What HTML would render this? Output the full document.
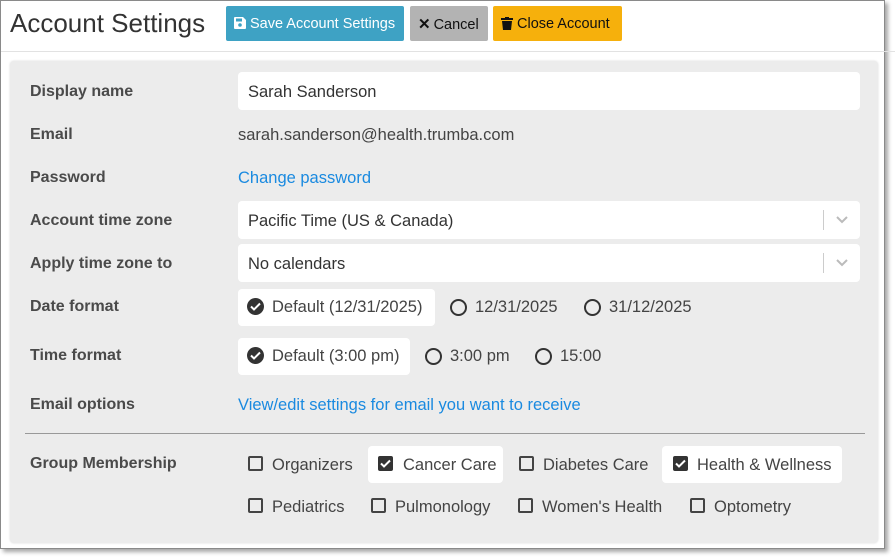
<!DOCTYPE html>
<html><head><style>
*{box-sizing:border-box;margin:0;padding:0}
body{width:896px;height:557px;background:#fff;font-family:"Liberation Sans",Arial,sans-serif;color:#333;position:relative;overflow:hidden}
.frame{position:absolute;left:0;top:0;width:885px;height:549px;border:1px solid #8a8a8a;box-shadow:3px 3px 4px rgba(0,0,0,.35);background:#fff}
.a{position:absolute;white-space:nowrap}
.hdr{left:10px;top:8px;font-size:26px;color:#333}
.btn{position:absolute;top:6px;height:35px;border-radius:2px;font-size:14.5px;line-height:37px;padding-left:8px}
.sep{position:absolute;left:1px;right:1px;top:51px;height:1px;background:#e2e2e2}
.panel{position:absolute;left:10px;top:61px;width:868px;height:482px;background:#ececec;border-radius:4px;box-shadow:0 0 2px rgba(0,0,0,.15)}
.lbl{font-size:16px;font-weight:bold;color:#4a4a4a;left:30px}
.val{font-size:16.5px;color:#444}
.inp{position:absolute;left:238px;width:622px;height:38px;background:#fff;border-radius:4px;font-size:16.5px;line-height:40px;padding-left:10px;color:#333}
.chip{position:absolute;background:#fff;border-radius:4px}
.lnk{color:#1a8ae0;font-size:16.5px}
.rad{position:absolute;width:17px;height:17px;border:2px solid #333;border-radius:50%}
.radc{position:absolute;width:17px;height:17px;background:#333;border-radius:50%}
.cb{position:absolute;width:15px;height:15px;border:2px solid #444;border-radius:2px}
.cbc{position:absolute;width:15px;height:15px;background:#333;border-radius:2px}
</style></head><body>
<div class="frame"></div>
<div class="a hdr">Account Settings</div>
<div class="btn" style="left:226px;width:178px;background:#3ea2c4;color:#fff"><svg width="12" height="12" viewBox="0 0 12 12" style="vertical-align:-1px;margin-right:4px"><path d="M1 0h8l3 3v8a1 1 0 0 1-1 1H1a1 1 0 0 1-1-1V1a1 1 0 0 1 1-1z" fill="#fff"/><rect x="2" y="1.5" width="6" height="3" fill="#3ea2c4"/><circle cx="6" cy="8" r="1.8" fill="#3ea2c4"/></svg>Save Account Settings</div>
<div class="btn" style="left:410px;width:78px;background:#b3b3b3;color:#111"><b style="font-size:15px;margin-right:3px">✕</b>Cancel</div>
<div class="btn" style="left:493px;width:129px;background:#f6b00c;color:#111"><svg width="12" height="13" viewBox="0 0 12 13" style="vertical-align:-2px;margin-right:4px"><rect x="0" y="1" width="12" height="2" fill="#111"/><rect x="4" y="0" width="4" height="2" fill="#111"/><path d="M1 4h10l-1 9H2z" fill="#111"/></svg>Close Account</div>
<div class="sep"></div>
<div class="panel"></div>

<div class="a lbl" style="top:83px">Display name</div>
<div class="inp" style="top:72px">Sarah Sanderson</div>
<div class="a lbl" style="top:126px">Email</div>
<div class="a val" style="left:238px;top:126px">sarah.sanderson@health.trumba.com</div>
<div class="a lbl" style="top:169px">Password</div>
<div class="a lnk" style="left:238px;top:169px">Change password</div>
<div class="a lbl" style="top:212px">Account time zone</div>
<div class="inp" style="top:201px">Pacific Time (US &amp; Canada)</div>
<div class="a lbl" style="top:255px">Apply time zone to</div>
<div class="inp" style="top:244px">No calendars</div>
<div class="a" style="left:823px;top:210px;width:1px;height:20px;background:#ccc"></div>
<div class="a" style="left:823px;top:253px;width:1px;height:20px;background:#ccc"></div>
<svg class="a" style="left:836px;top:216px" width="12" height="8"><path d="M1 1l5 5 5-5" stroke="#bbb" stroke-width="2" fill="none"/></svg>
<svg class="a" style="left:836px;top:259px" width="12" height="8"><path d="M1 1l5 5 5-5" stroke="#bbb" stroke-width="2" fill="none"/></svg>

<div class="a lbl" style="top:298px">Date format</div>
<div class="chip" style="left:238px;top:289px;width:197px;height:37px"></div>
<div class="radc" style="left:247px;top:298px"></div>
<svg class="a" style="left:250px;top:302px" width="11" height="9"><path d="M1 4.5l3 3 6-6" stroke="#fff" stroke-width="2" fill="none"/></svg>
<div class="a val" style="left:272px;top:298px">Default (12/31/2025)</div>
<div class="rad" style="left:450px;top:299px"></div>
<div class="a val" style="left:475px;top:298px">12/31/2025</div>
<div class="rad" style="left:584px;top:299px"></div>
<div class="a val" style="left:609px;top:298px">31/12/2025</div>

<div class="a lbl" style="top:347px">Time format</div>
<div class="chip" style="left:238px;top:338px;width:172px;height:37px"></div>
<div class="radc" style="left:247px;top:347px"></div>
<svg class="a" style="left:250px;top:351px" width="11" height="9"><path d="M1 4.5l3 3 6-6" stroke="#fff" stroke-width="2" fill="none"/></svg>
<div class="a val" style="left:272px;top:347px">Default (3:00 pm)</div>
<div class="rad" style="left:425px;top:348px"></div>
<div class="a val" style="left:450px;top:347px">3:00 pm</div>
<div class="rad" style="left:535px;top:348px"></div>
<div class="a val" style="left:560px;top:347px">15:00</div>

<div class="a lbl" style="top:396px">Email options</div>
<div class="a lnk" style="left:238px;top:396px">View/edit settings for email you want to receive</div>
<div class="a" style="left:25px;top:433px;width:840px;height:1px;background:#999"></div>

<div class="a lbl" style="top:455px">Group Membership</div>
<div class="chip" style="left:368px;top:446px;width:135px;height:37px"></div>
<div class="chip" style="left:662px;top:446px;width:180px;height:37px"></div>
<div class="cb" style="left:248px;top:456px"></div><div class="a val" style="left:272px;top:456px">Organizers</div>
<div class="cbc" style="left:378px;top:456px"></div><svg class="a" style="left:380px;top:459px" width="11" height="9"><path d="M1 4.5l3 3 6-6" stroke="#fff" stroke-width="2" fill="none"/></svg><div class="a val" style="left:403px;top:456px">Cancer Care</div>
<div class="cb" style="left:519px;top:456px"></div><div class="a val" style="left:543px;top:456px">Diabetes Care</div>
<div class="cbc" style="left:673px;top:456px"></div><svg class="a" style="left:675px;top:459px" width="11" height="9"><path d="M1 4.5l3 3 6-6" stroke="#fff" stroke-width="2" fill="none"/></svg><div class="a val" style="left:697px;top:456px">Health &amp; Wellness</div>
<div class="cb" style="left:248px;top:498px"></div><div class="a val" style="left:272px;top:498px">Pediatrics</div>
<div class="cb" style="left:371px;top:498px"></div><div class="a val" style="left:395px;top:498px">Pulmonology</div>
<div class="cb" style="left:518px;top:498px"></div><div class="a val" style="left:542px;top:498px">Women's Health</div>
<div class="cb" style="left:690px;top:498px"></div><div class="a val" style="left:714px;top:498px">Optometry</div>
</body></html>
